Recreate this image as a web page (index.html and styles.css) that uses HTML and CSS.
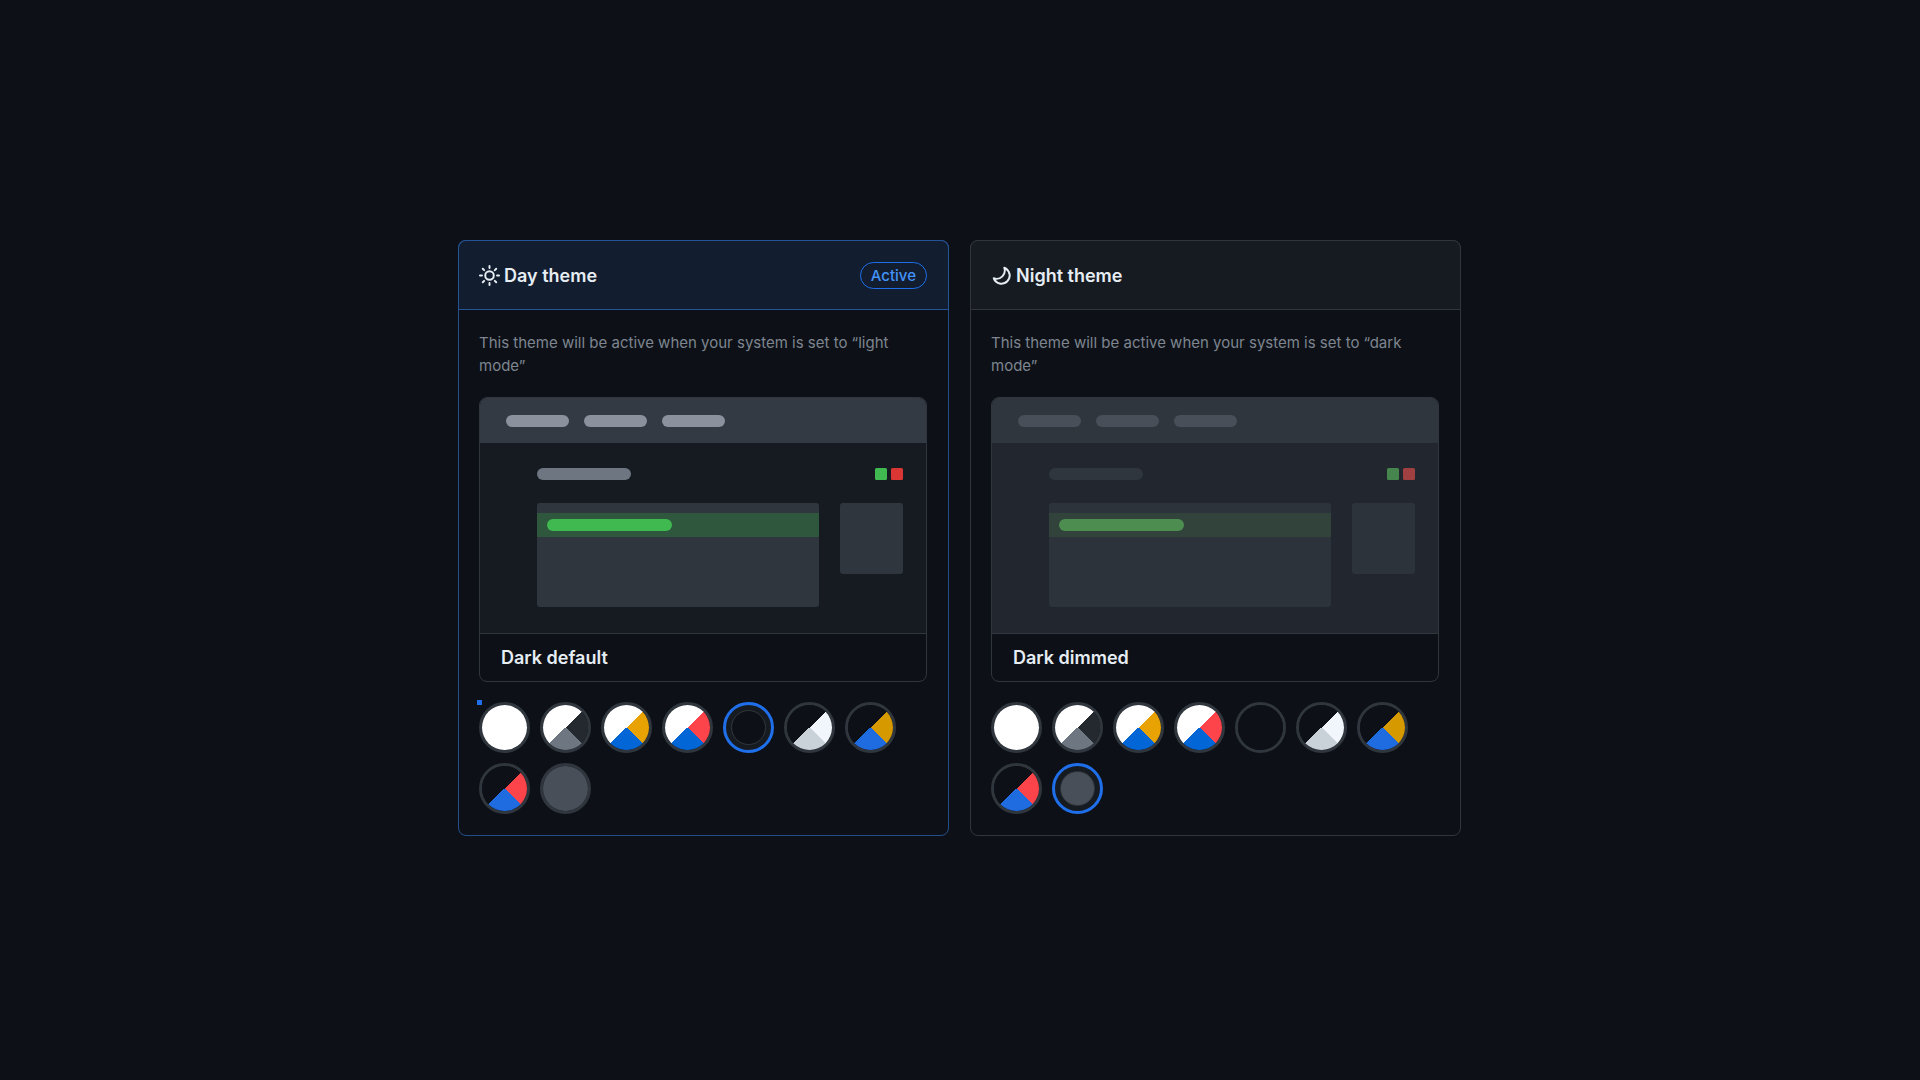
FILE: index.html
```html
<!DOCTYPE html>
<html lang="en">
<head>
<meta charset="utf-8">
<meta name="viewport" content="width=device-width, initial-scale=1">
<title>Theme preferences</title>
<link rel="stylesheet" href="styles.css">
</head>
<body>
<main class="themes">
  <section class="card card-active">
    <header class="card-header">
      <h2 class="card-title">
        <svg class="icon" viewBox="0 0 16 16" aria-hidden="true"><path fill-rule="evenodd" d="M8 10.5a2.5 2.5 0 100-5 2.5 2.5 0 000 5zM8 12a4 4 0 100-8 4 4 0 000 8zM8 0a.75.75 0 01.75.75v1.5a.75.75 0 01-1.5 0V.75A.75.75 0 018 0zm0 13a.75.75 0 01.75.75v1.5a.75.75 0 01-1.5 0v-1.5A.75.75 0 018 13zM2.343 2.343a.75.75 0 011.061 0l1.06 1.061a.75.75 0 01-1.06 1.06l-1.06-1.06a.75.75 0 010-1.06zm9.193 9.193a.75.75 0 011.06 0l1.061 1.06a.75.75 0 01-1.06 1.061l-1.061-1.06a.75.75 0 010-1.061zM16 8a.75.75 0 01-.75.75h-1.5a.75.75 0 010-1.5h1.5A.75.75 0 0116 8zM3 8a.75.75 0 01-.75.75H.75a.75.75 0 010-1.5h1.5A.75.75 0 013 8zm10.657-5.657a.75.75 0 010 1.061l-1.061 1.06a.75.75 0 11-1.06-1.06l1.06-1.06a.75.75 0 011.06 0zm-9.193 9.193a.75.75 0 010 1.06l-1.06 1.061a.75.75 0 11-1.061-1.06l1.06-1.061a.75.75 0 011.061 0z"/></svg>
        Day theme
      </h2>
      <span class="badge">Active</span>
    </header>
    <div class="card-body">
      <p class="description">This theme will be active when your system is set to “light mode”</p>
      <figure class="preview">
        <svg class="preview-art" viewBox="0 0 446 235" aria-hidden="true">
          <rect width="446" height="235" fill="#161b22"/>
          <rect width="446" height="45" fill="#343a43"/>
          <g fill="#8b919d">
            <rect x="26" y="17" width="63" height="12" rx="6"/>
            <rect x="104" y="17" width="63" height="12" rx="6"/>
            <rect x="182" y="17" width="63" height="12" rx="6"/>
          </g>
          <rect x="57" y="70" width="94" height="12" rx="6" fill="#6e7681"/>
          <rect x="395" y="70" width="12" height="12" rx="1.5" fill="#3fb950"/>
          <rect x="411" y="70" width="12" height="12" rx="1.5" fill="#da3633"/>
          <rect x="57" y="105" width="282" height="104" rx="3" fill="#30363d"/>
          <rect x="57" y="115" width="282" height="24" fill="#2f573e"/>
          <rect x="67" y="121" width="125" height="12" rx="6" fill="#3fb950"/>
          <rect x="360" y="105" width="63" height="71" rx="3" fill="#30363d"/>
        </svg>
        <figcaption class="preview-name">Dark default</figcaption>
      </figure>
      <div class="swatches swatches-focus" role="radiogroup" aria-label="Day theme">
        <input class="swatch light" type="radio" name="day" aria-label="Light default">
        <input class="swatch light-contrast" type="radio" name="day" aria-label="Light high contrast">
        <input class="swatch light-colorblind" type="radio" name="day" aria-label="Light colorblind">
        <input class="swatch light-tritanopia" type="radio" name="day" aria-label="Light tritanopia">
        <input class="swatch dark" type="radio" name="day" aria-label="Dark default" checked>
        <input class="swatch dark-contrast" type="radio" name="day" aria-label="Dark high contrast">
        <input class="swatch dark-colorblind" type="radio" name="day" aria-label="Dark colorblind">
        <input class="swatch dark-tritanopia" type="radio" name="day" aria-label="Dark tritanopia">
        <input class="swatch dimmed" type="radio" name="day" aria-label="Dark dimmed">
      </div>
    </div>
  </section>

  <section class="card">
    <header class="card-header">
      <h2 class="card-title">
        <svg class="icon" viewBox="0 0 16 16" aria-hidden="true"><path fill-rule="evenodd" d="M9.598 1.591a.75.75 0 01.785-.175 7 7 0 11-8.967 8.967.75.75 0 01.961-.96 5.5 5.5 0 007.046-7.046.75.75 0 01.175-.786zm1.616 1.945a7 7 0 01-7.678 7.678 5.5 5.5 0 107.678-7.678z"/></svg>
        Night theme
      </h2>
    </header>
    <div class="card-body">
      <p class="description">This theme will be active when your system is set to “dark mode”</p>
      <figure class="preview">
        <svg class="preview-art" viewBox="0 0 446 235" aria-hidden="true">
          <rect width="446" height="235" fill="#22262e"/>
          <rect width="446" height="45" fill="#30363d"/>
          <g fill="#484f58">
            <rect x="26" y="17" width="63" height="12" rx="6"/>
            <rect x="104" y="17" width="63" height="12" rx="6"/>
            <rect x="182" y="17" width="63" height="12" rx="6"/>
          </g>
          <rect x="57" y="70" width="94" height="12" rx="6" fill="#30363d"/>
          <rect x="395" y="70" width="12" height="12" rx="1.5" fill="#46854e"/>
          <rect x="411" y="70" width="12" height="12" rx="1.5" fill="#a04041"/>
          <rect x="57" y="105" width="282" height="104" rx="3" fill="#2d333b"/>
          <rect x="57" y="115" width="282" height="24" fill="#32433c"/>
          <rect x="67" y="121" width="125" height="12" rx="6" fill="#4d8d50"/>
          <rect x="360" y="105" width="63" height="71" rx="3" fill="#2d333b"/>
        </svg>
        <figcaption class="preview-name">Dark dimmed</figcaption>
      </figure>
      <div class="swatches" role="radiogroup" aria-label="Night theme">
        <input class="swatch light" type="radio" name="night" aria-label="Light default">
        <input class="swatch light-contrast" type="radio" name="night" aria-label="Light high contrast">
        <input class="swatch light-colorblind" type="radio" name="night" aria-label="Light colorblind">
        <input class="swatch light-tritanopia" type="radio" name="night" aria-label="Light tritanopia">
        <input class="swatch dark" type="radio" name="night" aria-label="Dark default">
        <input class="swatch dark-contrast" type="radio" name="night" aria-label="Dark high contrast">
        <input class="swatch dark-colorblind" type="radio" name="night" aria-label="Dark colorblind">
        <input class="swatch dark-tritanopia" type="radio" name="night" aria-label="Dark tritanopia">
        <input class="swatch dimmed" type="radio" name="night" aria-label="Dark dimmed" checked>
      </div>
    </div>
  </section>
</main>
</body>
</html>
```
FILE: styles.css
```css
:root {
  --canvas: #0d1117;
  --subtle: #161b22;
  --border: #30363d;
  --text: #e6edf3;
  --muted: #7d8590;
  --accent: #1f6feb;
  --accent-muted: rgba(56, 139, 253, 0.5);
}

* {
  box-sizing: border-box;
}

body {
  margin: 0;
  min-height: 100vh;
  padding: 0 1px 4px 0;
  display: flex;
  align-items: center;
  justify-content: center;
  background: var(--canvas);
  color: var(--text);
  font-family: Inter, "Liberation Sans", sans-serif;
  font-size: 15px;
  line-height: 23px;
}

.themes {
  width: 100%;
  max-width: 1003px;
  display: grid;
  grid-template-columns: repeat(auto-fit, minmax(320px, 1fr));
  gap: 21px;
}

.card {
  --card-border: var(--border);
  --header-bg: var(--subtle);
  border: 1px solid var(--card-border);
  border-radius: 8px;
}

.card-active {
  --card-border: var(--accent-muted);
  --header-bg: #121d2f;
}

.card-header {
  display: flex;
  align-items: center;
  justify-content: space-between;
  min-height: 70px;
  margin: -1px -1px 0;
  padding: 0 21px 0 20px;
  border: 1px solid var(--card-border);
  border-radius: 8px 8px 0 0;
  background: var(--header-bg);
}

.card-title {
  display: flex;
  align-items: center;
  gap: 4px;
  margin: 0;
  font-size: 18px;
  font-weight: 600;
}

.icon {
  width: 21px;
  height: 21px;
  fill: currentColor;
}

.badge {
  padding: 0 10px;
  border: 1px solid var(--accent);
  border-radius: 14px;
  color: #4493f8;
  font-weight: 500;
  line-height: 25px;
}

.card-body {
  display: flex;
  flex-direction: column;
  gap: 20px;
  padding: 21px 21px 21px 20px;
}

.description {
  margin: 0;
  color: var(--muted);
}

.preview {
  margin: 0;
  overflow: hidden;
  border: 1px solid var(--border);
  border-radius: 8px;
}

.preview-art {
  display: block;
  width: 100%;
}

.preview-name {
  padding: 12px 21px;
  border-top: 1px solid var(--border);
  font-size: 18px;
  font-weight: 600;
}

.swatches {
  position: relative;
  display: flex;
  flex-wrap: wrap;
  gap: 10px;
}

/* Focus marker at the corner of the group that holds keyboard focus */
.swatches-focus::before {
  content: "";
  position: absolute;
  top: -2px;
  left: -2px;
  width: 5px;
  height: 5px;
  background: var(--accent);
}

.swatch {
  appearance: none;
  display: grid;
  width: 51px;
  height: 51px;
  margin: 0;
  border: 3px solid var(--border);
  border-radius: 50%;
  cursor: pointer;
}

.swatch::before {
  content: "";
  border-radius: 50%;
  background: conic-gradient(var(--base) 45deg, var(--right) 45deg 135deg, var(--bottom) 135deg 225deg, var(--base) 225deg);
}

.swatch:checked {
  padding: 5px;
  border-color: var(--accent);
  background: var(--subtle);
}

.swatch:checked::before {
  border: 1px solid var(--border);
}

.light { --base: #ffffff; --right: #ffffff; --bottom: #ffffff; }
.light-contrast { --base: #ffffff; --right: #24292f; --bottom: #6e7781; }
.light-colorblind { --base: #ffffff; --right: #e8a202; --bottom: #0366d6; }
.light-tritanopia { --base: #ffffff; --right: #fc444a; --bottom: #0366d6; }
.dark { --base: #0d1117; --right: #0d1117; --bottom: #0d1117; }
.dark-contrast { --base: #0d1117; --right: #f0f6fc; --bottom: #c9d1d9; }
.dark-colorblind { --base: #0d1117; --right: #d69a00; --bottom: #1f6be0; }
.dark-tritanopia { --base: #0d1117; --right: #fc444a; --bottom: #1f6be0; }
.dimmed { --base: #484f58; --right: #484f58; --bottom: #484f58; }
```
